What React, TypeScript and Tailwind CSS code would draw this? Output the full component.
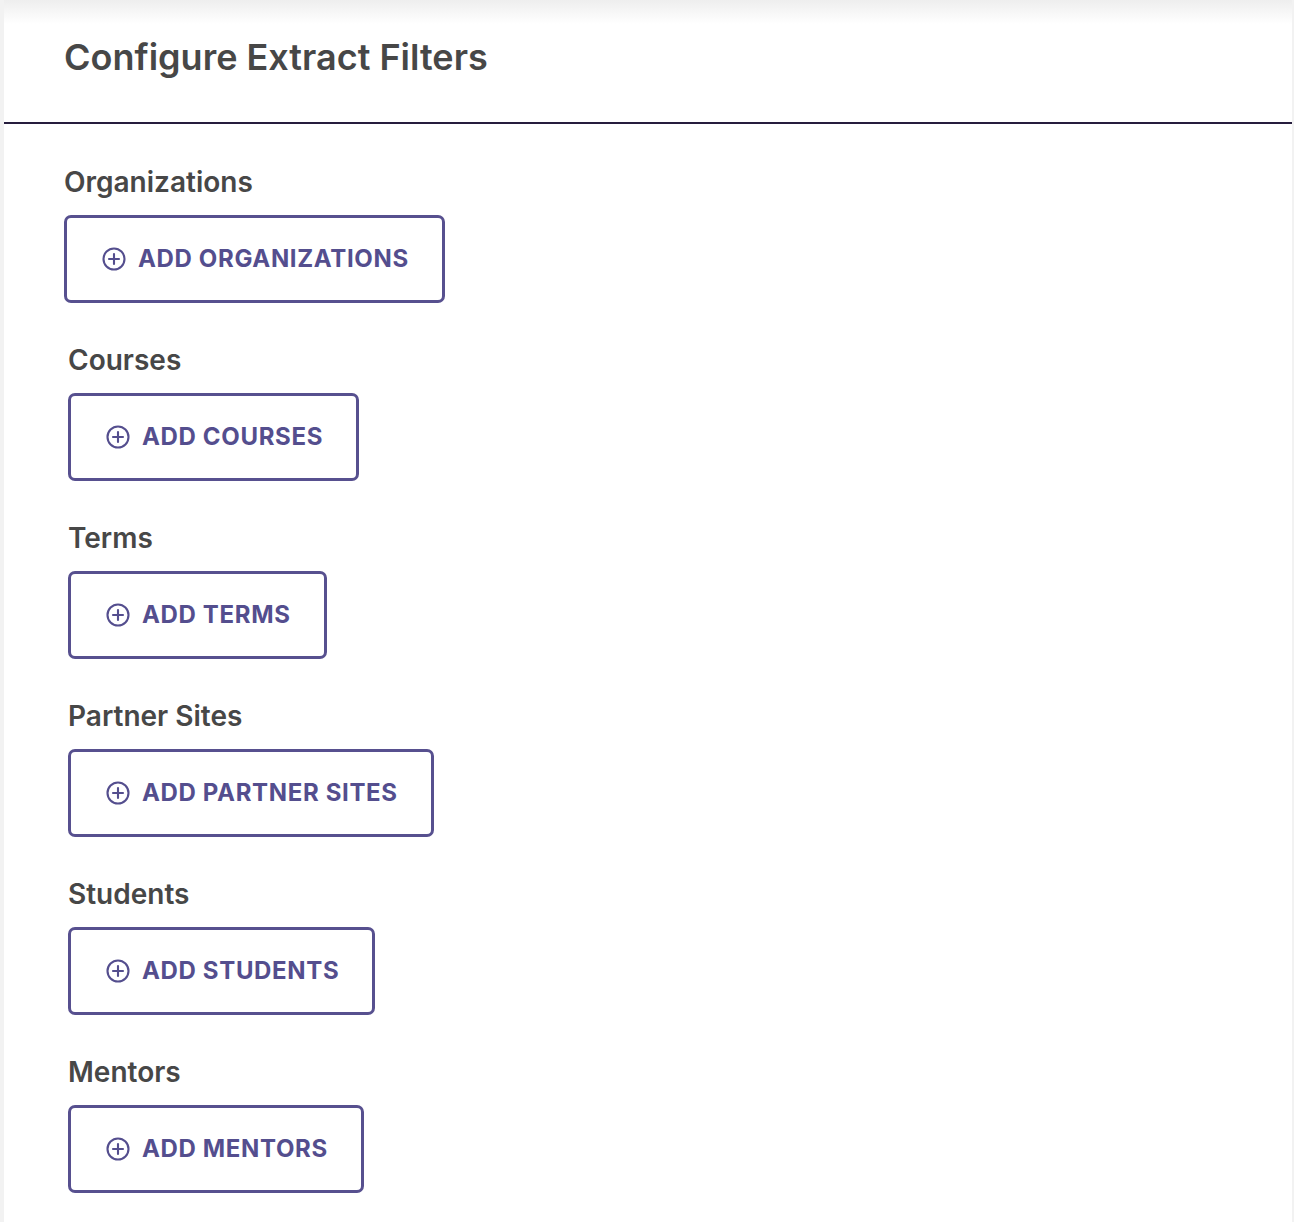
import React from "react";

const sections = [
  { label: "Organizations", button: "ADD ORGANIZATIONS", first: true },
  { label: "Courses", button: "ADD COURSES" },
  { label: "Terms", button: "ADD TERMS" },
  { label: "Partner Sites", button: "ADD PARTNER SITES" },
  { label: "Students", button: "ADD STUDENTS" },
  { label: "Mentors", button: "ADD MENTORS" },
];

function PlusCircle() {
  return (
    <svg width="24" height="24" viewBox="0 0 24 24" fill="none" stroke="currentColor" strokeWidth="2.1" strokeLinecap="round">
      <circle cx="12" cy="12" r="10.5" />
      <path d="M12 7v10M7 12h10" />
    </svg>
  );
}

export default function App() {
  return (
    <div
      className="min-h-[1222px] w-full bg-[#f2f2f2] pl-[4px] pr-[2px]"
      style={{ fontFamily: "Inter, 'Noto Sans', sans-serif" }}
    >
      <div className="min-h-[1222px] bg-white">
        <header className="h-[124px] border-b-2 border-[#261d3d] bg-[linear-gradient(to_bottom,#eeeeee,#ffffff_24px)] pl-[60px] pt-[36px]">
          <h1 className="text-[36px] font-semibold leading-[42px] text-[#474747]">Configure Extract Filters</h1>
        </header>
        <main className="flex flex-col gap-[39px] pl-[60px] pt-[40px]">
          {sections.map((s) => (
            <section key={s.label} className={s.first ? "flex flex-col items-start" : "flex flex-col items-start pl-[4px]"}>
              <h2 className="text-[28px] font-semibold leading-[36px] text-[#474747]">{s.label}</h2>
              <button className="mt-[15px] flex h-[88px] items-center gap-[12px] rounded-[7px] border-[3px] border-[#57508f] bg-white pl-[35px] pr-[33px] text-[24px] font-bold tracking-[0.65px] text-[#544e8e]">
                <PlusCircle />
                <span>{s.button}</span>
              </button>
            </section>
          ))}
        </main>
      </div>
    </div>
  );
}
